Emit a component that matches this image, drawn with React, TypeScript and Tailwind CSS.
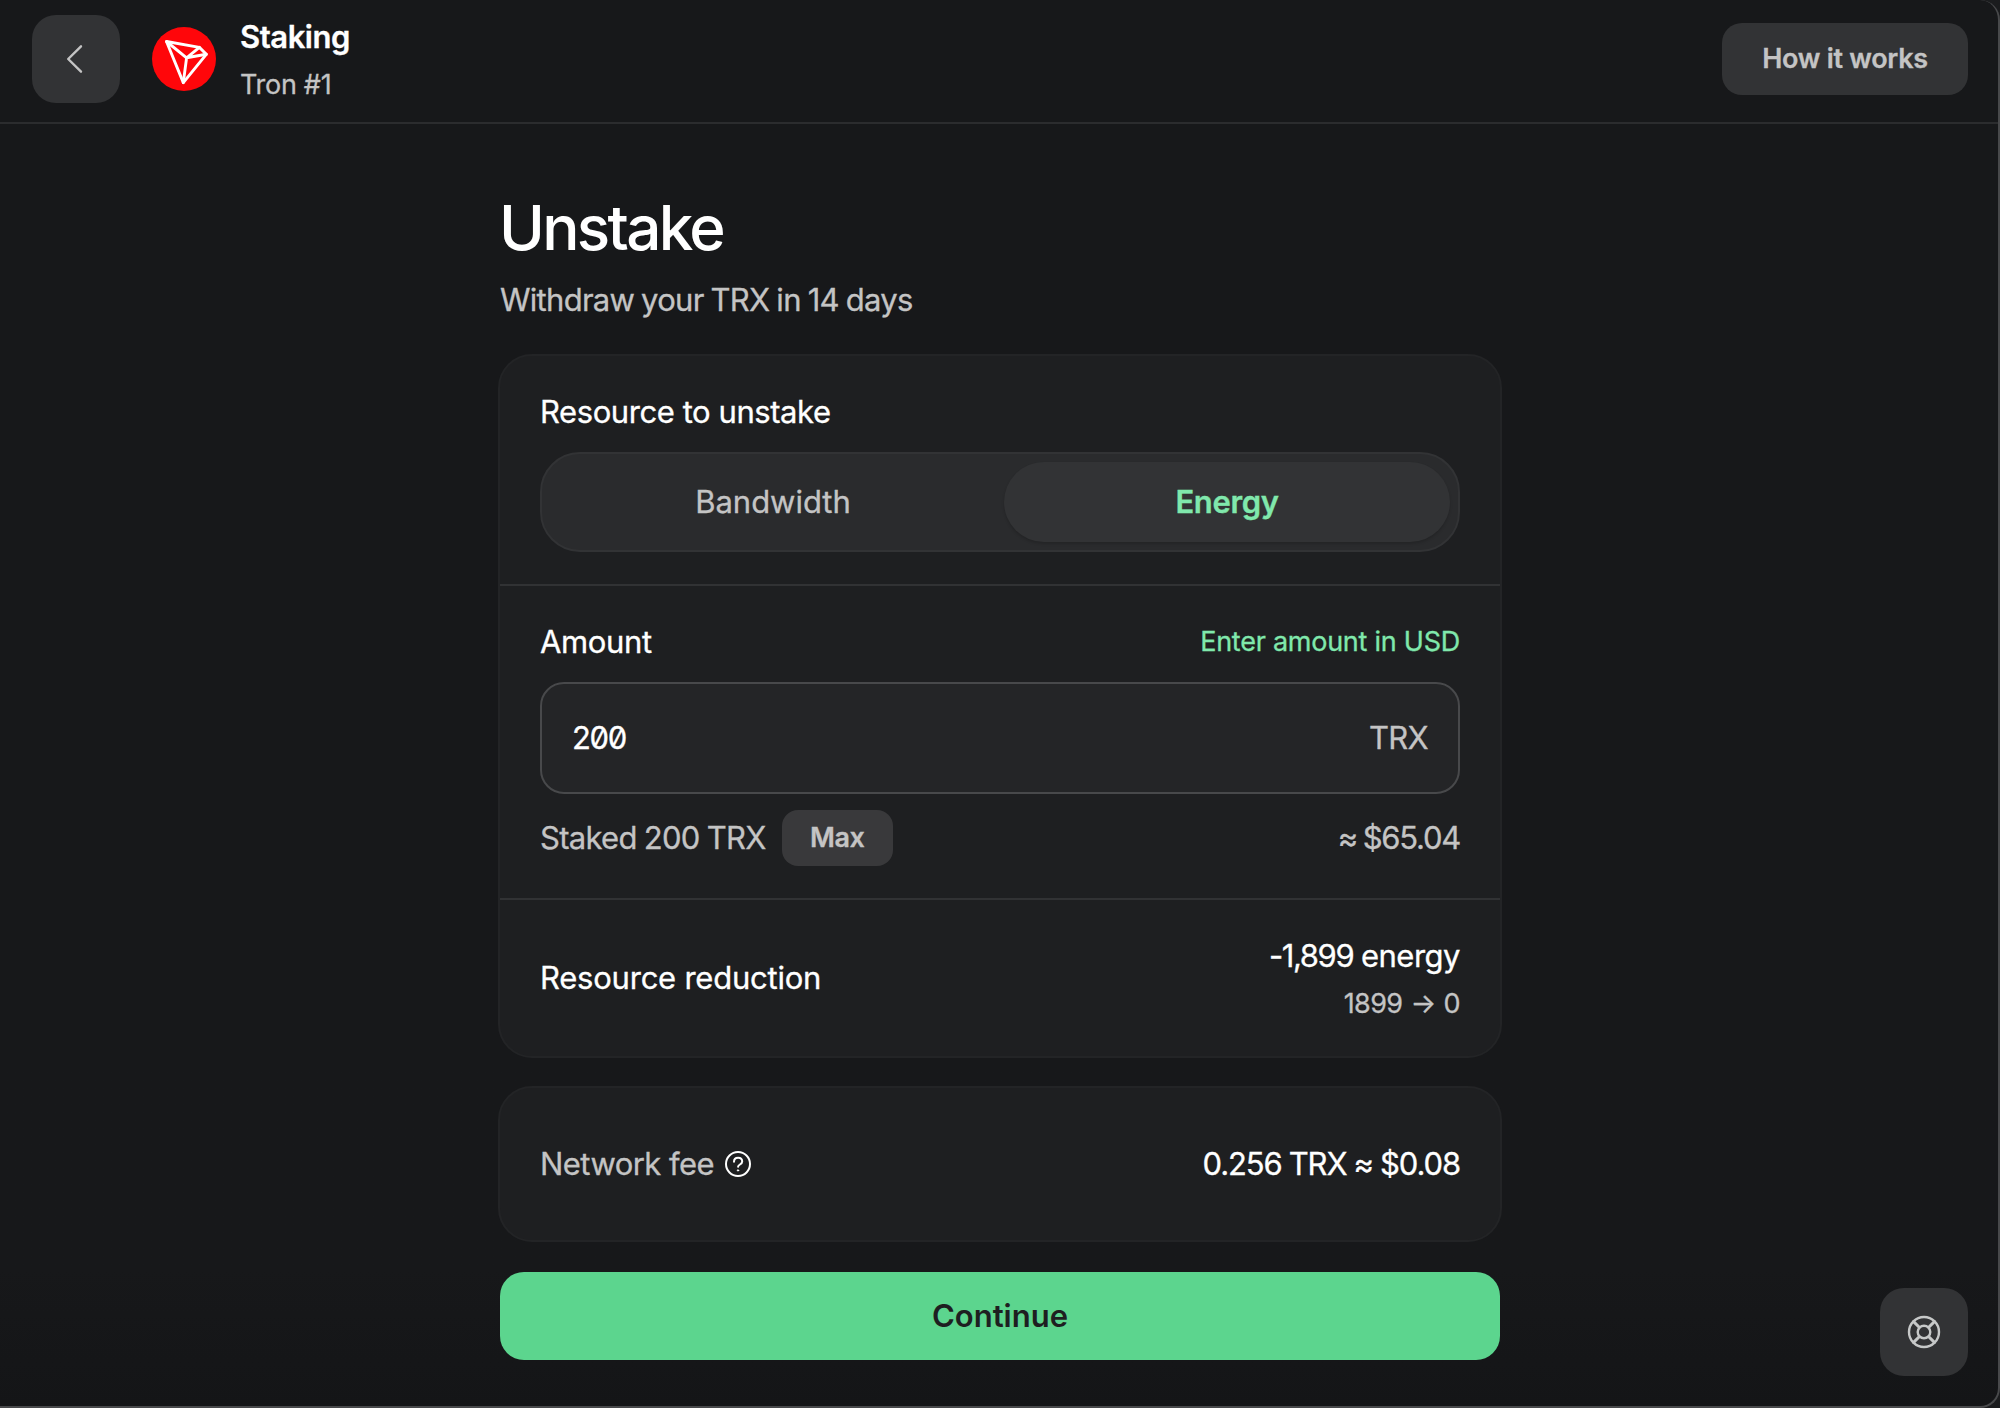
import type { ReactNode } from "react";

function BackIcon() {
  return (
    <svg width="88" height="88" viewBox="0 0 88 88" fill="none" stroke="#c4c4c4" strokeWidth="2.4" strokeLinecap="round" strokeLinejoin="round">
      <path d="M49 31.3 36.2 44 49 56.7" />
    </svg>
  );
}

function TronLogo() {
  return (
    <svg width="64" height="64" viewBox="0 0 64 64" fill="none" className="shrink-0">
      <circle cx="32" cy="32" r="32" fill="#ff060a" />
      <g stroke="#fff" strokeWidth="2.9" strokeLinejoin="round" strokeLinecap="round">
        <path d="M14.5 14.5 47.4 20.4 54.3 27.3 31.3 55.6Z" />
        <path d="M14.5 14.5 34.6 30.8 31.3 55.6M34.6 30.8 47.4 20.4M34.6 30.8 54.3 27.3" />
      </g>
    </svg>
  );
}

function QuestionIcon() {
  return (
    <svg width="26" height="26" viewBox="0 0 26 26" fill="none" stroke="#fff" strokeWidth="2" strokeLinecap="round" strokeLinejoin="round">
      <circle cx="13" cy="13" r="12" />
      <path d="M9 10.8c0-2.4 1.7-4 4.1-4s4.1 1.5 4.1 3.7c0 3-4.1 2.9-4.1 5.3" />
      <circle cx="13" cy="19.4" r="0.7" fill="#fff" strokeWidth="1" />
    </svg>
  );
}

function LifebuoyIcon() {
  return (
    <svg width="34" height="34" viewBox="0 0 34 34" fill="none" stroke="#c6c8c8" strokeWidth="2.4" strokeLinecap="round">
      <circle cx="17" cy="17" r="15" />
      <circle cx="17" cy="17" r="6.3" />
      <path strokeWidth="3" d="M6.6 6.6l5.6 5.6M27.4 6.6l-5.6 5.6M6.6 27.4l5.6-5.6M27.4 27.4l-5.6-5.6" />
    </svg>
  );
}

function Card({ className, children }: { className: string; children: ReactNode }) {
  return (
    <section className={`-mx-0.5 rounded-[34px] border-2 border-[#232426] bg-[#1e1f21] text-[31px] leading-10 ${className}`}>
      {children}
    </section>
  );
}

export default function App() {
  return (
    <div className="relative h-[1408px] w-[2000px] overflow-hidden bg-[#1b1c1e] font-['Inter',sans-serif] text-white [-webkit-text-stroke:0.3px]">
      <div className="h-full overflow-hidden rounded-r-[20px] bg-linear-to-b from-[#17181a] from-90% to-[#141517]">
        <header className="flex h-[124px] items-center border-b-2 border-[#2b2c2e] pr-8 pb-1 pl-8">
          <button className="h-[88px] w-[88px] rounded-[24px] bg-[#323335]" aria-label="Back">
            <BackIcon />
          </button>
          <div className="ml-8">
            <TronLogo />
          </div>
          <div className="ml-6 pt-0.5">
            <div className="text-[31px] leading-[48px] font-semibold tracking-[-0.46px]">Staking</div>
            <div className="text-[27px] leading-[47px] tracking-[-0.3px] text-[#c4c4c4]">Tron #1</div>
          </div>
          <button className="ml-auto h-[72px] w-[246px] rounded-[20px] bg-[#323335] text-[27px] font-semibold tracking-[-0.29px] text-[#c4c4c4]">
            How it works
          </button>
        </header>

        <main className="mx-auto w-[1000px] pt-[68px]">
          <h1 className="-ml-px text-[62px] leading-[71px] font-medium tracking-[-2.7px] [-webkit-text-stroke:0]">Unstake</h1>
          <p className="mt-[17px] text-[31px] leading-10 tracking-[-0.72px] text-[#c4c4c4] [word-spacing:-1.1px]">
            Withdraw your TRX in 14 days
          </p>

          <Card className="mt-[34px]">
            <div className="border-b-2 border-[#313234] px-10 pt-9 pb-8">
              <div className="tracking-[-0.43px]">Resource to unstake</div>
              <div className="mt-5 grid h-[100px] grid-cols-2 gap-2 rounded-[40px] border-2 border-[#323335] bg-[#2a2b2d] p-2">
                <button className="rounded-[40px] tracking-[-0.03px] text-[#c4c4c4]">Bandwidth</button>
                <button className="rounded-[40px] bg-[#323335] font-semibold tracking-[-0.38px] text-[#80e8ac] shadow-[0_2px_3px_rgba(0,0,0,0.16)]">
                  Energy
                </button>
              </div>
            </div>

            <div className="border-b-2 border-[#313234] px-10 pt-9 pb-8">
              <div className="flex justify-between">
                <span className="tracking-[-0.36px]">Amount</span>
                <span className="text-[27px] tracking-[-0.25px] text-[#80e8ac]">Enter amount in USD</span>
              </div>
              <div className="mt-5 flex h-28 items-center justify-between rounded-[24px] border-2 border-[#48494b] bg-[#242527] px-[30px] tracking-[-0.73px]">
                <span className="tracking-[-1.3px] [font-feature-settings:'zero']">200</span>
                <span className="text-[#c4c4c4]">TRX</span>
              </div>
              <div className="mt-4 flex h-14 items-center text-[#c4c4c4]">
                <span className="tracking-[-0.72px] [word-spacing:-0.9px]">Staked 200 TRX</span>
                <button className="ml-4 h-14 w-[111px] rounded-[16px] bg-[#39393b] text-[27px] font-semibold tracking-[-0.45px]">
                  Max
                </button>
                <span className="ml-auto tracking-[-1.25px] [word-spacing:-1.9px]">≈ $65.04</span>
              </div>
            </div>

            <div className="flex h-[156px] items-center justify-between px-10">
              <span className="tracking-[-0.23px]">Resource reduction</span>
              <div className="pt-1 text-right">
                <div className="tracking-[-1px]">
                  <span className="tracking-[-1.4px]">-1,899</span> <span className="tracking-[-0.5px]">energy</span>
                </div>
                <div className="mt-2 text-[27px] tracking-[-0.6px] text-[#c4c4c4] [word-spacing:1px]">1899 → 0</div>
              </div>
            </div>
          </Card>

          <Card className="mt-7 flex h-[156px] items-center justify-between px-10">
            <div className="flex items-center gap-[11px]">
              <span className="tracking-[-0.54px] text-[#c4c4c4]">Network fee</span>
              <QuestionIcon />
            </div>
            <span className="tracking-[-1.1px] [word-spacing:-0.6px]">0.256 TRX ≈ $0.08</span>
          </Card>

          <button className="mt-[30px] h-[88px] w-full rounded-[24px] bg-[#5cd58e] text-[31px] font-semibold text-[#1e1f21] [-webkit-text-stroke:0]">
            Continue
          </button>
        </main>
      </div>

      <button className="absolute right-8 bottom-8 flex h-[88px] w-[88px] items-center justify-center rounded-[24px] bg-[#323335]" aria-label="Support">
        <LifebuoyIcon />
      </button>
      <div className="pointer-events-none absolute inset-0 rounded-r-[20px] border-r-2 border-b-2 border-[#48494b]" />
    </div>
  );
}
